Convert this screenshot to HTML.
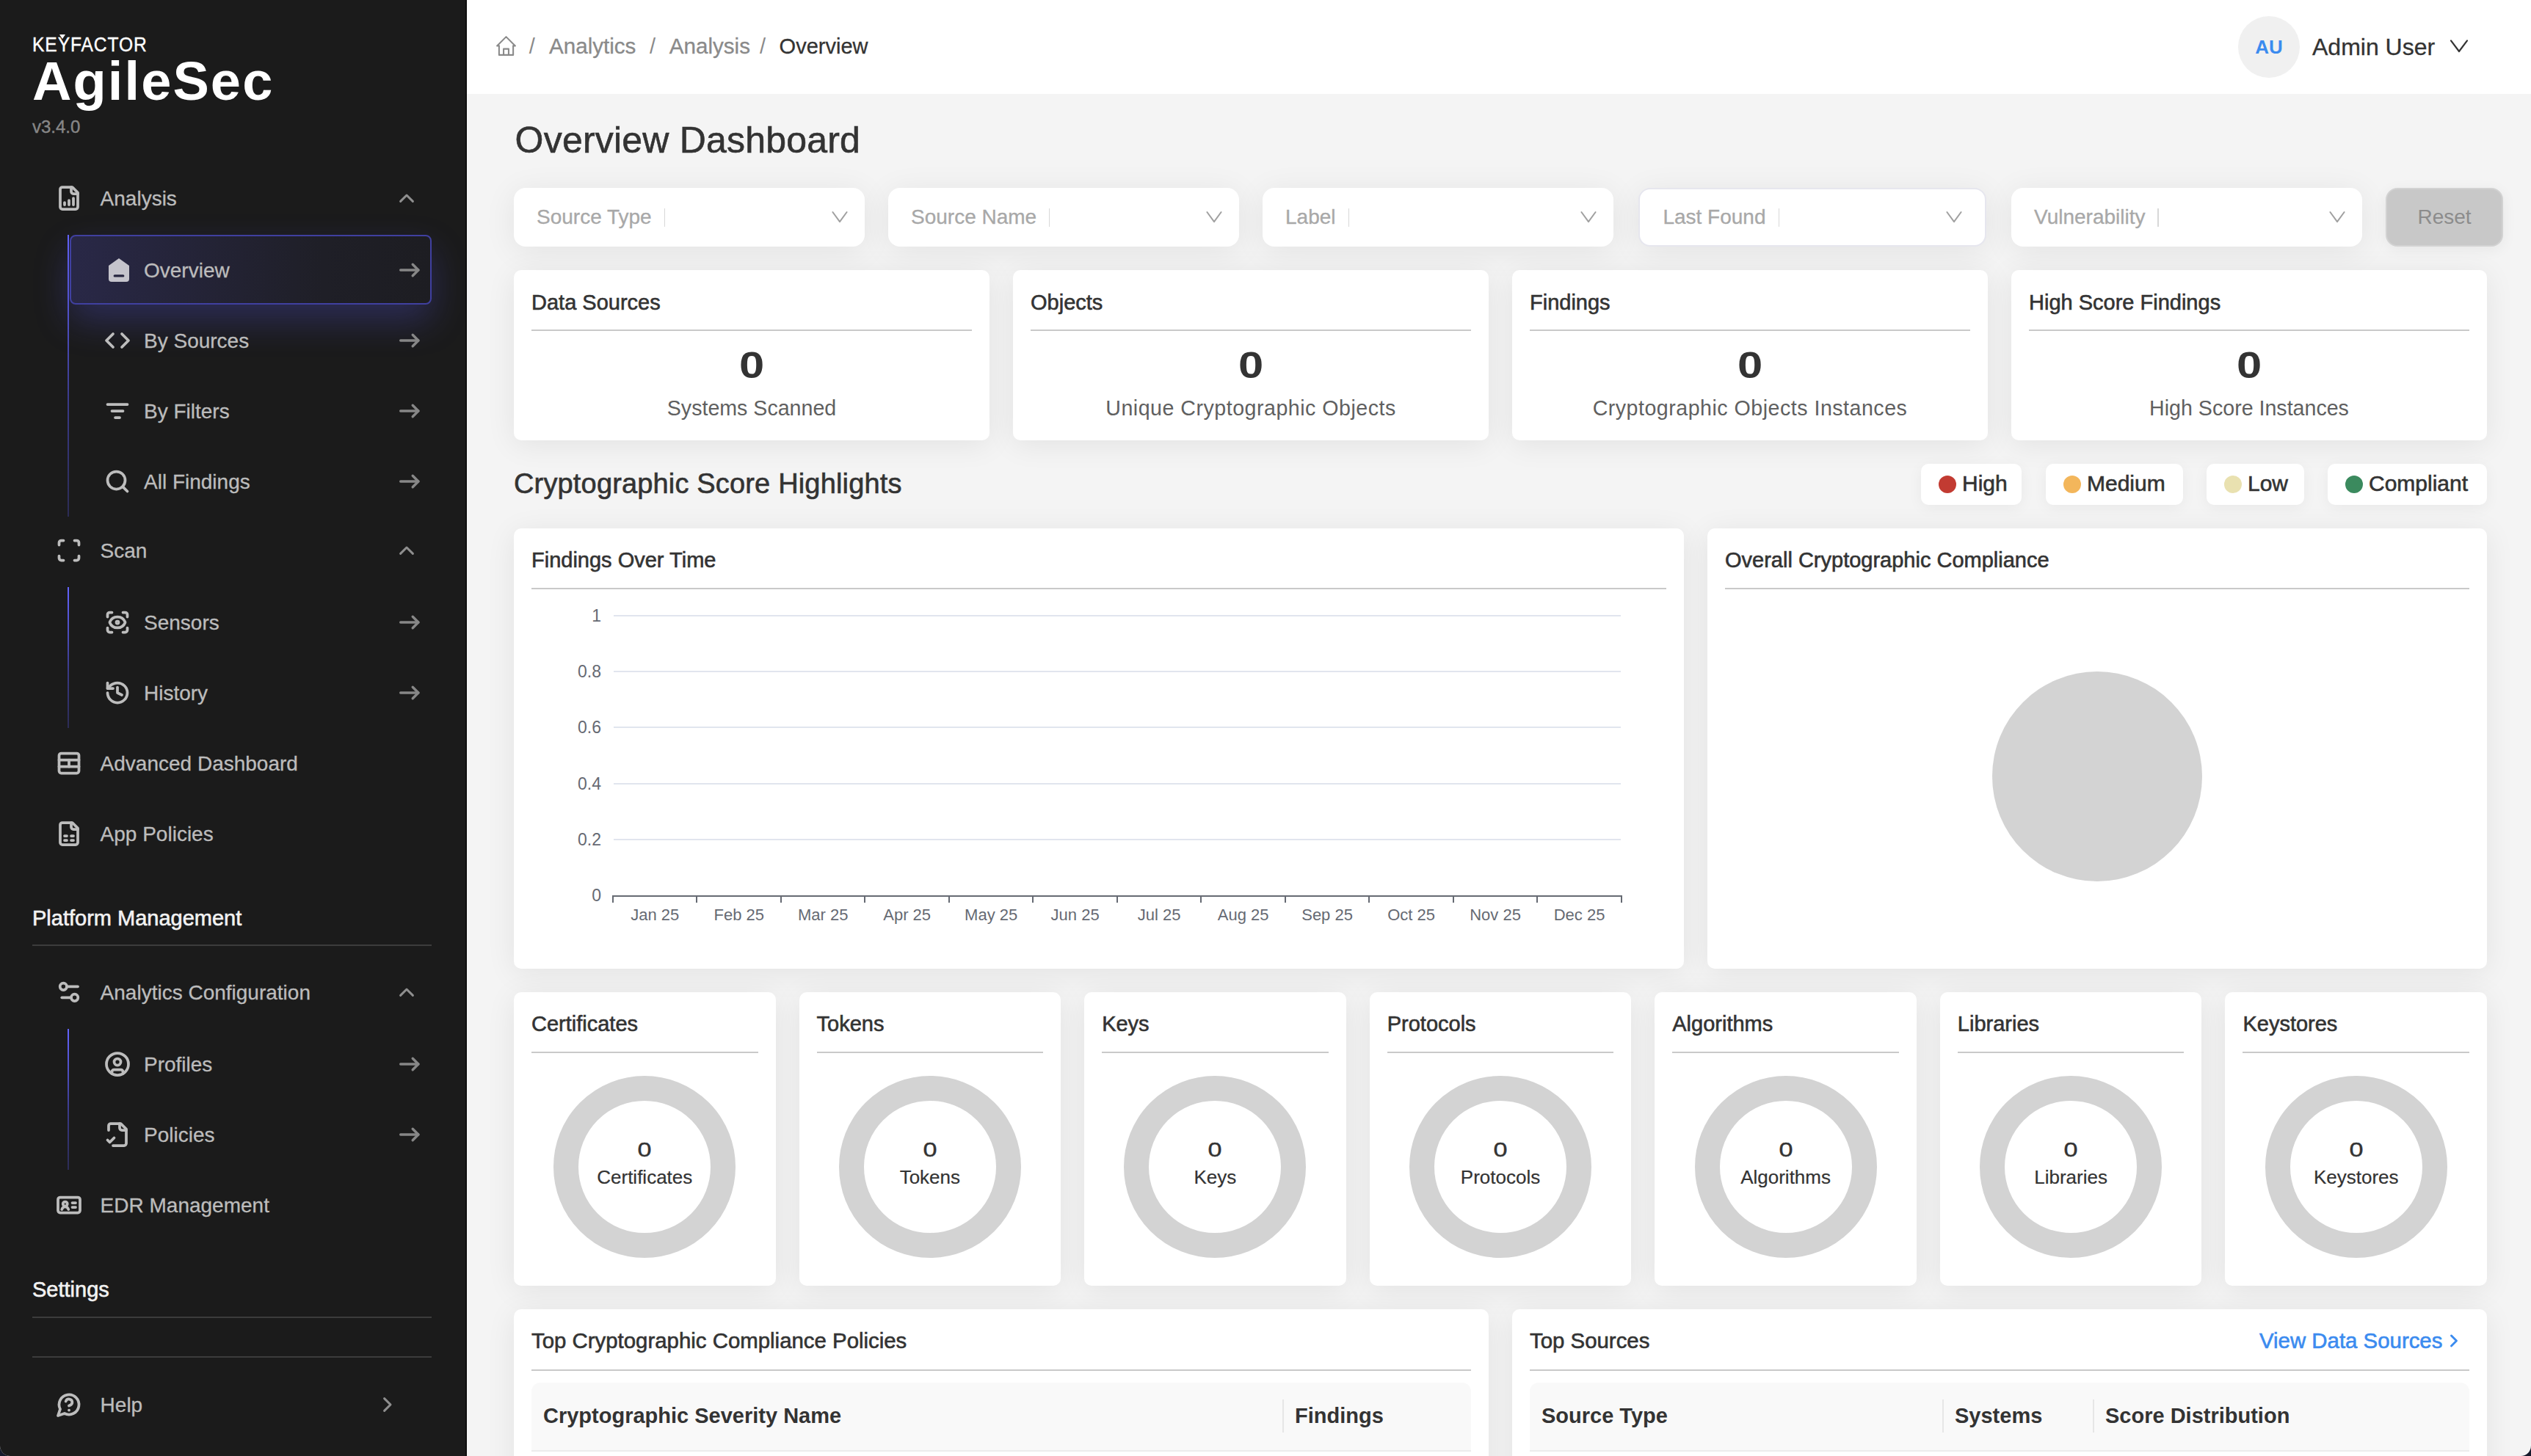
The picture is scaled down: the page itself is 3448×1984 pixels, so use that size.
<!DOCTYPE html>
<html>
<head>
<meta charset="utf-8">
<style>
html{zoom:2;background:#161a2c}
*{box-sizing:border-box;margin:0;padding:0}
body{width:1724px;height:992px;overflow:hidden;border-radius:0 0 7px 7px;font-family:"Liberation Sans",sans-serif;background:#f4f4f4;position:relative;color:#333}
.abs{position:absolute}
.t{position:absolute;white-space:nowrap;line-height:1}
.card{position:absolute;background:#fff;border-radius:5px;box-shadow:0 3px 20px rgba(0,0,0,0.075)}
.med{-webkit-text-stroke:0.25px currentColor}
</style>
</head>
<body>
<div class="abs" style="left:0px;top:0px;width:318px;height:992px;background:#1b1b1b;border-right:1px solid #0e0e0e"></div>
<div class="t" style="left:22px;top:23.3px;font-size:13.6px;color:#fff;transform:scaleX(0.905);transform-origin:0 0;letter-spacing:0.5px;-webkit-text-stroke:0.2px #fff">KEYFACTOR</div>
<svg class="abs" style="left:40.6px;top:23.6px" width="4" height="3" viewBox="0 0 4 3"><path d="M0 0H4L2 3Z" fill="#fff"/></svg>
<div class="t" style="left:22.00px;top:36.88px;font-size:37px;color:#fff;font-weight:bold;letter-spacing:1.05px">AgileSec</div>
<div class="t" style="left:22.00px;top:80.34px;font-size:12px;color:#878787;font-weight:normal;-webkit-text-stroke:0.2px currentColor">v3.4.0</div>
<div class="abs" style="left:46px;top:160px;width:1px;height:192px;background:linear-gradient(#6464ff,#3a3a88 60%,#2c2c55)"></div>
<div class="abs" style="left:46px;top:400px;width:1px;height:96px;background:linear-gradient(#6464ff,#3a3a88 60%,#2c2c55)"></div>
<div class="abs" style="left:46px;top:701px;width:1px;height:96px;background:linear-gradient(#6464ff,#3a3a88 60%,#2c2c55)"></div>
<div class="abs" style="left:47.3px;top:160.2px;width:246.6px;height:47.4px;border:1px solid #4040a0;border-radius:4px;background:linear-gradient(90deg,#292847,#1f1f27 70%,#1d1d22);box-shadow:0 11px 24px rgba(80,80,210,0.32)"></div>
<svg class="abs" style="left:38px;top:126px" width="18" height="18" viewBox="0 0 24 24" fill="none" stroke="#bdbdbd" stroke-width="2.5" stroke-linecap="round" stroke-linejoin="round"><path d="M15 2H6a2 2 0 0 0-2 2v16a2 2 0 0 0 2 2h12a2 2 0 0 0 2-2V7Z"/><path d="M14 2v4a2 2 0 0 0 2 2h4"/><path d="M8 18v-2"/><path d="M12 18v-4"/><path d="M16 18v-6"/></svg>
<div class="t" style="left:68.30px;top:128.35px;font-size:14px;color:#bcbcbc;font-weight:normal;-webkit-text-stroke:0.15px currentColor;">Analysis</div>
<svg class="abs" style="left:270px;top:130px" width="14" height="10" viewBox="0 0 14 10" fill="none" stroke="#8f8f8f" stroke-width="1.5" stroke-linecap="round" stroke-linejoin="round"><path d="M2.8 4.2 7 0 11.2 4.2" transform="translate(0 3)"/></svg>
<svg class="abs" style="left:73.5px;top:175.5px" width="15" height="17" viewBox="0 0 15 17"><path d="M7.5 0.5 L14.5 5.5 V14.5 a2 2 0 0 1 -2 2 H2.5 a2 2 0 0 1 -2 -2 V5.5 Z" fill="#c5c4cc"/><rect x="3.8" y="11.6" width="7.4" height="1.7" rx="0.85" fill="#26253f"/></svg>
<div class="t" style="left:98.00px;top:177.35px;font-size:14px;color:#bcbcbc;font-weight:normal;-webkit-text-stroke:0.15px currentColor;">Overview</div>
<svg class="abs" style="left:270px;top:177px" width="18" height="14" viewBox="0 0 18 14" fill="none" stroke="#878787" stroke-width="1.7" stroke-linecap="round" stroke-linejoin="round"><path d="M2.85 7H14.95"/><path d="M11.1 3.15 14.95 7 11.1 10.85"/></svg>
<svg class="abs" style="left:71px;top:223px" width="18" height="18" viewBox="0 0 24 24" fill="none" stroke="#bdbdbd" stroke-width="2.5" stroke-linecap="round" stroke-linejoin="round"><polyline points="16 18 22 12 16 6"/><polyline points="8 6 2 12 8 18"/></svg>
<div class="t" style="left:98.00px;top:225.35px;font-size:14px;color:#bcbcbc;font-weight:normal;-webkit-text-stroke:0.15px currentColor;">By Sources</div>
<svg class="abs" style="left:270px;top:225px" width="18" height="14" viewBox="0 0 18 14" fill="none" stroke="#878787" stroke-width="1.7" stroke-linecap="round" stroke-linejoin="round"><path d="M2.85 7H14.95"/><path d="M11.1 3.15 14.95 7 11.1 10.85"/></svg>
<svg class="abs" style="left:71px;top:271px" width="18" height="18" viewBox="0 0 24 24" fill="none" stroke="#bdbdbd" stroke-width="2.5" stroke-linecap="round" stroke-linejoin="round"><path d="M3 6h18"/><path d="M7 12h10"/><path d="M10 18h4"/></svg>
<div class="t" style="left:98.00px;top:273.35px;font-size:14px;color:#bcbcbc;font-weight:normal;-webkit-text-stroke:0.15px currentColor;">By Filters</div>
<svg class="abs" style="left:270px;top:273px" width="18" height="14" viewBox="0 0 18 14" fill="none" stroke="#878787" stroke-width="1.7" stroke-linecap="round" stroke-linejoin="round"><path d="M2.85 7H14.95"/><path d="M11.1 3.15 14.95 7 11.1 10.85"/></svg>
<svg class="abs" style="left:71px;top:319px" width="18" height="18" viewBox="0 0 24 24" fill="none" stroke="#bdbdbd" stroke-width="2.5" stroke-linecap="round" stroke-linejoin="round"><circle cx="11" cy="11" r="8"/><path d="m21 21-4.3-4.3"/></svg>
<div class="t" style="left:98.00px;top:321.35px;font-size:14px;color:#bcbcbc;font-weight:normal;-webkit-text-stroke:0.15px currentColor;">All Findings</div>
<svg class="abs" style="left:270px;top:321px" width="18" height="14" viewBox="0 0 18 14" fill="none" stroke="#878787" stroke-width="1.7" stroke-linecap="round" stroke-linejoin="round"><path d="M2.85 7H14.95"/><path d="M11.1 3.15 14.95 7 11.1 10.85"/></svg>
<svg class="abs" style="left:38px;top:366px" width="18" height="18" viewBox="0 0 24 24" fill="none" stroke="#bdbdbd" stroke-width="2.5" stroke-linecap="round" stroke-linejoin="round"><path d="M3 7V5a2 2 0 0 1 2-2h2"/><path d="M17 3h2a2 2 0 0 1 2 2v2"/><path d="M21 17v2a2 2 0 0 1-2 2h-2"/><path d="M7 21H5a2 2 0 0 1-2-2v-2"/></svg>
<div class="t" style="left:68.30px;top:368.35px;font-size:14px;color:#bcbcbc;font-weight:normal;-webkit-text-stroke:0.15px currentColor;">Scan</div>
<svg class="abs" style="left:270px;top:370px" width="14" height="10" viewBox="0 0 14 10" fill="none" stroke="#8f8f8f" stroke-width="1.5" stroke-linecap="round" stroke-linejoin="round"><path d="M2.8 4.2 7 0 11.2 4.2" transform="translate(0 3)"/></svg>
<svg class="abs" style="left:71px;top:415px" width="18" height="18" viewBox="0 0 24 24" fill="none" stroke="#bdbdbd" stroke-width="2.5" stroke-linecap="round" stroke-linejoin="round"><path d="M3 7V5a2 2 0 0 1 2-2h2"/><path d="M17 3h2a2 2 0 0 1 2 2v2"/><path d="M21 17v2a2 2 0 0 1-2 2h-2"/><path d="M7 21H5a2 2 0 0 1-2-2v-2"/><circle cx="12" cy="12" r="1"/><path d="M18.944 12.33a1 1 0 0 0 0-.66 7.5 7.5 0 0 0-13.888 0 1 1 0 0 0 0 .66 7.5 7.5 0 0 0 13.888 0"/></svg>
<div class="t" style="left:98.00px;top:417.35px;font-size:14px;color:#bcbcbc;font-weight:normal;-webkit-text-stroke:0.15px currentColor;">Sensors</div>
<svg class="abs" style="left:270px;top:417px" width="18" height="14" viewBox="0 0 18 14" fill="none" stroke="#878787" stroke-width="1.7" stroke-linecap="round" stroke-linejoin="round"><path d="M2.85 7H14.95"/><path d="M11.1 3.15 14.95 7 11.1 10.85"/></svg>
<svg class="abs" style="left:71px;top:463px" width="18" height="18" viewBox="0 0 24 24" fill="none" stroke="#bdbdbd" stroke-width="2.5" stroke-linecap="round" stroke-linejoin="round"><path d="M3 12a9 9 0 1 0 9-9 9.75 9.75 0 0 0-6.74 2.74L3 8"/><path d="M3 3v5h5"/><path d="M12 7v5l4 2"/></svg>
<div class="t" style="left:98.00px;top:465.35px;font-size:14px;color:#bcbcbc;font-weight:normal;-webkit-text-stroke:0.15px currentColor;">History</div>
<svg class="abs" style="left:270px;top:465px" width="18" height="14" viewBox="0 0 18 14" fill="none" stroke="#878787" stroke-width="1.7" stroke-linecap="round" stroke-linejoin="round"><path d="M2.85 7H14.95"/><path d="M11.1 3.15 14.95 7 11.1 10.85"/></svg>
<svg class="abs" style="left:38px;top:511px" width="18" height="18" viewBox="0 0 24 24" fill="none" stroke="#bdbdbd" stroke-width="2.5" stroke-linecap="round" stroke-linejoin="round"><rect x="3" y="3" width="18" height="18" rx="2"/><path d="M3 9h18"/><path d="M3 15h18"/><path d="M12 9v6"/></svg>
<div class="t" style="left:68.30px;top:513.35px;font-size:14px;color:#bcbcbc;font-weight:normal;-webkit-text-stroke:0.15px currentColor;">Advanced Dashboard</div>
<svg class="abs" style="left:38px;top:559px" width="18" height="18" viewBox="0 0 24 24" fill="none" stroke="#bdbdbd" stroke-width="2.5" stroke-linecap="round" stroke-linejoin="round"><path d="M15 2H6a2 2 0 0 0-2 2v16a2 2 0 0 0 2 2h12a2 2 0 0 0 2-2V7Z"/><path d="M14 2v4a2 2 0 0 0 2 2h4"/><path d="M8 14h2"/><path d="M14 14h2"/><path d="M8 18h2"/><path d="M14 18h2"/></svg>
<div class="t" style="left:68.30px;top:561.35px;font-size:14px;color:#bcbcbc;font-weight:normal;-webkit-text-stroke:0.15px currentColor;">App Policies</div>
<div class="t" style="left:22.00px;top:618.73px;font-size:14.5px;color:#f2f2f2;font-weight:normal;-webkit-text-stroke:0.3px currentColor;">Platform Management</div>
<div class="abs" style="left:22px;top:643.5px;width:272px;height:1px;background:#3c3c3c"></div>
<svg class="abs" style="left:38px;top:667px" width="18" height="18" viewBox="0 0 24 24" fill="none" stroke="#bdbdbd" stroke-width="2.5" stroke-linecap="round" stroke-linejoin="round"><circle cx="6.9" cy="6.9" r="3.1"/><path d="M10 6.9h10"/><circle cx="17.1" cy="16.9" r="3.1"/><path d="M5.5 16.9H14"/></svg>
<div class="t" style="left:68.30px;top:669.35px;font-size:14px;color:#bcbcbc;font-weight:normal;-webkit-text-stroke:0.15px currentColor;">Analytics Configuration</div>
<svg class="abs" style="left:270px;top:671px" width="14" height="10" viewBox="0 0 14 10" fill="none" stroke="#8f8f8f" stroke-width="1.5" stroke-linecap="round" stroke-linejoin="round"><path d="M2.8 4.2 7 0 11.2 4.2" transform="translate(0 3)"/></svg>
<svg class="abs" style="left:71px;top:716px" width="18" height="18" viewBox="0 0 24 24" fill="none" stroke="#bdbdbd" stroke-width="2.5" stroke-linecap="round" stroke-linejoin="round"><circle cx="12" cy="12" r="10"/><circle cx="12" cy="10" r="3"/><path d="M7 20.662V19a2 2 0 0 1 2-2h6a2 2 0 0 1 2 2v1.662"/></svg>
<div class="t" style="left:98.00px;top:718.35px;font-size:14px;color:#bcbcbc;font-weight:normal;-webkit-text-stroke:0.15px currentColor;">Profiles</div>
<svg class="abs" style="left:270px;top:718px" width="18" height="14" viewBox="0 0 18 14" fill="none" stroke="#878787" stroke-width="1.7" stroke-linecap="round" stroke-linejoin="round"><path d="M2.85 7H14.95"/><path d="M11.1 3.15 14.95 7 11.1 10.85"/></svg>
<svg class="abs" style="left:71px;top:764px" width="18" height="18" viewBox="0 0 24 24" fill="none" stroke="#bdbdbd" stroke-width="2.5" stroke-linecap="round" stroke-linejoin="round"><path d="M4 8V4a2 2 0 0 1 2-2h9l5 5v13a2 2 0 0 1-2 2H8"/><path d="M14 2v4a2 2 0 0 0 2 2h4"/><path d="m3 17 2 2 4-4"/></svg>
<div class="t" style="left:98.00px;top:766.35px;font-size:14px;color:#bcbcbc;font-weight:normal;-webkit-text-stroke:0.15px currentColor;">Policies</div>
<svg class="abs" style="left:270px;top:766px" width="18" height="14" viewBox="0 0 18 14" fill="none" stroke="#878787" stroke-width="1.7" stroke-linecap="round" stroke-linejoin="round"><path d="M2.85 7H14.95"/><path d="M11.1 3.15 14.95 7 11.1 10.85"/></svg>
<svg class="abs" style="left:38px;top:812px" width="18" height="18" viewBox="0 0 24 24" fill="none" stroke="#bdbdbd" stroke-width="2.5" stroke-linecap="round" stroke-linejoin="round"><rect x="2" y="5" width="20" height="14" rx="2"/><path d="M15 10h3"/><path d="M15 14h3"/><circle cx="8.5" cy="11" r="2"/><path d="M5.5 16c.5-1.5 1.5-2.5 3-2.5s2.5 1 3 2.5"/></svg>
<div class="t" style="left:68.30px;top:814.35px;font-size:14px;color:#bcbcbc;font-weight:normal;-webkit-text-stroke:0.15px currentColor;">EDR Management</div>
<div class="t" style="left:22.00px;top:871.73px;font-size:14.5px;color:#f2f2f2;font-weight:normal;-webkit-text-stroke:0.3px currentColor;">Settings</div>
<div class="abs" style="left:22px;top:897px;width:272px;height:1px;background:#3c3c3c"></div>
<div class="abs" style="left:22px;top:924px;width:272px;height:1px;background:#3c3c3c"></div>
<svg class="abs" style="left:38px;top:948px" width="18" height="18" viewBox="0 0 24 24" fill="none" stroke="#bdbdbd" stroke-width="2.5" stroke-linecap="round" stroke-linejoin="round"><path d="M7.9 20A9 9 0 1 0 4 16.1L2 22Z"/><path d="M9.09 9a3 3 0 0 1 5.83 1c0 2-3 3-3 3"/><path d="M12 17h.01"/></svg>
<div class="t" style="left:68.30px;top:950.35px;font-size:14px;color:#bcbcbc;font-weight:normal;-webkit-text-stroke:0.15px currentColor;">Help</div>
<svg class="abs" style="left:258px;top:950px" width="10" height="14" viewBox="0 0 10 14" fill="none" stroke="#8f8f8f" stroke-width="1.5" stroke-linecap="round" stroke-linejoin="round"><path d="M3.8 2.8 8 7 3.8 11.2"/></svg>
<div class="abs" style="left:318px;top:0px;width:1406px;height:64px;background:#fff"></div>
<svg class="abs" style="left:336.6px;top:23.2px" width="16.5" height="16.5" viewBox="0 0 24 24" fill="none" stroke="#8a8a8a" stroke-width="1.5" stroke-linecap="round" stroke-linejoin="round"><path d="M5 12H3l9-9 9 9h-2"/><path d="M5 12v9h14v-9"/><path d="M9.5 21v-6h5v6"/></svg>
<div class="t" style="left:360.40px;top:24.48px;font-size:14.5px;color:#8a8a8a;font-weight:normal;">/</div>
<div class="t" style="left:374.00px;top:24.22px;font-size:14.8px;color:#8a8a8a;font-weight:normal;-webkit-text-stroke:0.15px currentColor;">Analytics</div>
<div class="t" style="left:442.50px;top:24.48px;font-size:14.5px;color:#8a8a8a;font-weight:normal;">/</div>
<div class="t" style="left:455.90px;top:24.22px;font-size:14.8px;color:#8a8a8a;font-weight:normal;-webkit-text-stroke:0.15px currentColor;">Analysis</div>
<div class="t" style="left:517.50px;top:24.48px;font-size:14.5px;color:#8a8a8a;font-weight:normal;">/</div>
<div class="t" style="left:530.80px;top:24.48px;font-size:14.5px;color:#333;font-weight:normal;-webkit-text-stroke:0.15px currentColor;">Overview</div>
<div class="abs" style="left:1524.5px;top:11px;width:42px;height:42px;border-radius:50%;background:#f0f0f0"></div>
<div class="t" style="left:1245.50px;width:600px;text-align:center;top:25.50px;font-size:13px;color:#3b8bef;font-weight:bold;">AU</div>
<div class="t" style="left:1575.00px;top:24.16px;font-size:16px;color:#333;font-weight:normal;-webkit-text-stroke:0.15px currentColor;">Admin User</div>
<svg class="abs" style="left:1667px;top:23.5px" width="16" height="16" viewBox="0 0 16 16" fill="none" stroke="#333" stroke-width="1.1" stroke-linecap="round" stroke-linejoin="round"><path d="M2.5 4.2 8 11.5 13.5 4.2"/></svg>
<div class="t" style="left:350.80px;top:83.04px;font-size:25px;color:#333;font-weight:normal;-webkit-text-stroke:0.3px currentColor;letter-spacing:0.1px">Overview Dashboard</div>
<div class="abs" style="left:350px;top:128px;width:239px;height:40px;background:#fff;border-radius:8px;box-shadow:0 3px 22px rgba(0,0,0,0.075)"></div>
<div class="t" style="left:365.5px;top:140.80px;font-size:14px;color:#a8a8a8;-webkit-text-stroke:0.15px currentColor">Source Type<span style="display:inline-block;width:0.6px;height:12.5px;background:#d8d8d8;margin-left:8.5px;vertical-align:-2px"></span></div>
<svg class="abs" style="left:566.5px;top:143.5px" width="11" height="9" viewBox="0 0 11 9" fill="none" stroke="#a0a0a0" stroke-width="1" stroke-linecap="round" stroke-linejoin="round"><path d="M0.7 1 5.5 7.6 10.3 1"/></svg>
<div class="abs" style="left:605px;top:128px;width:239px;height:40px;background:#fff;border-radius:8px;box-shadow:0 3px 22px rgba(0,0,0,0.075)"></div>
<div class="t" style="left:620.5px;top:140.80px;font-size:14px;color:#a8a8a8;-webkit-text-stroke:0.15px currentColor">Source Name<span style="display:inline-block;width:0.6px;height:12.5px;background:#d8d8d8;margin-left:8.5px;vertical-align:-2px"></span></div>
<svg class="abs" style="left:821.5px;top:143.5px" width="11" height="9" viewBox="0 0 11 9" fill="none" stroke="#a0a0a0" stroke-width="1" stroke-linecap="round" stroke-linejoin="round"><path d="M0.7 1 5.5 7.6 10.3 1"/></svg>
<div class="abs" style="left:860px;top:128px;width:239px;height:40px;background:#fff;border-radius:8px;box-shadow:0 3px 22px rgba(0,0,0,0.075)"></div>
<div class="t" style="left:875.5px;top:140.80px;font-size:14px;color:#a8a8a8;-webkit-text-stroke:0.15px currentColor">Label<span style="display:inline-block;width:0.6px;height:12.5px;background:#d8d8d8;margin-left:8.5px;vertical-align:-2px"></span></div>
<svg class="abs" style="left:1076.5px;top:143.5px" width="11" height="9" viewBox="0 0 11 9" fill="none" stroke="#a0a0a0" stroke-width="1" stroke-linecap="round" stroke-linejoin="round"><path d="M0.7 1 5.5 7.6 10.3 1"/></svg>
<div class="abs" style="left:1116px;top:128px;width:237px;height:40px;background:#fff;border-radius:8px;box-shadow:0 3px 22px rgba(0,0,0,0.075);border:1px solid #e6e6ee"></div>
<div class="t" style="left:1132.7px;top:140.80px;font-size:14px;color:#a8a8a8;-webkit-text-stroke:0.15px currentColor">Last Found<span style="display:inline-block;width:0.6px;height:12.5px;background:#d8d8d8;margin-left:8.5px;vertical-align:-2px"></span></div>
<svg class="abs" style="left:1325.5px;top:143.5px" width="11" height="9" viewBox="0 0 11 9" fill="none" stroke="#a0a0a0" stroke-width="1" stroke-linecap="round" stroke-linejoin="round"><path d="M0.7 1 5.5 7.6 10.3 1"/></svg>
<div class="abs" style="left:1370px;top:128px;width:239px;height:40px;background:#fff;border-radius:8px;box-shadow:0 3px 22px rgba(0,0,0,0.075)"></div>
<div class="t" style="left:1385.5px;top:140.80px;font-size:14px;color:#a8a8a8;-webkit-text-stroke:0.15px currentColor">Vulnerability<span style="display:inline-block;width:0.6px;height:12.5px;background:#d8d8d8;margin-left:8.5px;vertical-align:-2px"></span></div>
<svg class="abs" style="left:1586.5px;top:143.5px" width="11" height="9" viewBox="0 0 11 9" fill="none" stroke="#a0a0a0" stroke-width="1" stroke-linecap="round" stroke-linejoin="round"><path d="M0.7 1 5.5 7.6 10.3 1"/></svg>
<div class="abs" style="left:1625px;top:128px;width:80px;height:40px;background:#c8c8c8;border:1px solid #d2d2d2;border-radius:8px;box-shadow:0 2px 10px rgba(0,0,0,0.06)"></div>
<div class="t" style="left:1365.00px;width:600px;text-align:center;top:140.80px;font-size:14px;color:#8c8c8c;font-weight:normal;">Reset</div>
<div class="card" style="left:350px;top:184px;width:324px;height:116px"></div>
<div class="t" style="left:362.00px;top:199.13px;font-size:14.5px;color:#333;font-weight:normal;-webkit-text-stroke:0.3px currentColor;">Data Sources</div>
<div class="abs" style="left:362px;top:224.5px;width:300px;height:1px;background:#c9c9c9"></div>
<div class="t" style="left:212.00px;width:600px;text-align:center;top:236.54px;font-size:25px;color:#333;font-weight:bold;transform:scaleX(1.23)">0</div>
<div class="t" style="left:212.00px;width:600px;text-align:center;top:270.90px;font-size:14.3px;color:#606060;font-weight:normal;">Systems Scanned</div>
<div class="card" style="left:690px;top:184px;width:324px;height:116px"></div>
<div class="t" style="left:702.00px;top:199.13px;font-size:14.5px;color:#333;font-weight:normal;-webkit-text-stroke:0.3px currentColor;">Objects</div>
<div class="abs" style="left:702px;top:224.5px;width:300px;height:1px;background:#c9c9c9"></div>
<div class="t" style="left:552.00px;width:600px;text-align:center;top:236.54px;font-size:25px;color:#333;font-weight:bold;transform:scaleX(1.23)">0</div>
<div class="t" style="left:552.00px;width:600px;text-align:center;top:270.90px;font-size:14.3px;color:#606060;font-weight:normal;letter-spacing:0.25px">Unique Cryptographic Objects</div>
<div class="card" style="left:1030px;top:184px;width:324px;height:116px"></div>
<div class="t" style="left:1042.00px;top:199.13px;font-size:14.5px;color:#333;font-weight:normal;-webkit-text-stroke:0.3px currentColor;">Findings</div>
<div class="abs" style="left:1042px;top:224.5px;width:300px;height:1px;background:#c9c9c9"></div>
<div class="t" style="left:892.00px;width:600px;text-align:center;top:236.54px;font-size:25px;color:#333;font-weight:bold;transform:scaleX(1.23)">0</div>
<div class="t" style="left:892.00px;width:600px;text-align:center;top:270.90px;font-size:14.3px;color:#606060;font-weight:normal;letter-spacing:0.25px">Cryptographic Objects Instances</div>
<div class="card" style="left:1370px;top:184px;width:324px;height:116px"></div>
<div class="t" style="left:1382.00px;top:199.13px;font-size:14.5px;color:#333;font-weight:normal;-webkit-text-stroke:0.3px currentColor;">High Score Findings</div>
<div class="abs" style="left:1382px;top:224.5px;width:300px;height:1px;background:#c9c9c9"></div>
<div class="t" style="left:1232.00px;width:600px;text-align:center;top:236.54px;font-size:25px;color:#333;font-weight:bold;transform:scaleX(1.23)">0</div>
<div class="t" style="left:1232.00px;width:600px;text-align:center;top:270.90px;font-size:14.3px;color:#606060;font-weight:normal;">High Score Instances</div>
<div class="t" style="left:350.00px;top:320.22px;font-size:19px;color:#333;font-weight:normal;-webkit-text-stroke:0.3px currentColor;letter-spacing:0.08px">Cryptographic Score Highlights</div>
<div class="abs" style="left:1308.5px;top:316px;width:68.5px;height:28px;background:#fff;border-radius:5px;box-shadow:0 2px 10px rgba(0,0,0,0.05)"></div>
<div class="abs" style="left:1320.5px;top:324px;width:12px;height:12px;border-radius:50%;background:#c23b32"></div>
<div class="t" style="left:1336.50px;top:322.10px;font-size:15px;color:#333;font-weight:normal;-webkit-text-stroke:0.3px currentColor;">High</div>
<div class="abs" style="left:1393.5px;top:316px;width:93.5px;height:28px;background:#fff;border-radius:5px;box-shadow:0 2px 10px rgba(0,0,0,0.05)"></div>
<div class="abs" style="left:1405.5px;top:324px;width:12px;height:12px;border-radius:50%;background:#f3b65b"></div>
<div class="t" style="left:1421.50px;top:322.10px;font-size:15px;color:#333;font-weight:normal;-webkit-text-stroke:0.3px currentColor;">Medium</div>
<div class="abs" style="left:1503px;top:316px;width:66.5px;height:28px;background:#fff;border-radius:5px;box-shadow:0 2px 10px rgba(0,0,0,0.05)"></div>
<div class="abs" style="left:1515px;top:324px;width:12px;height:12px;border-radius:50%;background:#e9e1b0"></div>
<div class="t" style="left:1531.00px;top:322.10px;font-size:15px;color:#333;font-weight:normal;-webkit-text-stroke:0.3px currentColor;">Low</div>
<div class="abs" style="left:1585.5px;top:316px;width:108.5px;height:28px;background:#fff;border-radius:5px;box-shadow:0 2px 10px rgba(0,0,0,0.05)"></div>
<div class="abs" style="left:1597.5px;top:324px;width:12px;height:12px;border-radius:50%;background:#3b8a5e"></div>
<div class="t" style="left:1613.50px;top:322.10px;font-size:15px;color:#333;font-weight:normal;-webkit-text-stroke:0.3px currentColor;">Compliant</div>
<div class="card" style="left:350px;top:360px;width:797px;height:300px"></div>
<div class="t" style="left:362.00px;top:374.73px;font-size:14.5px;color:#333;font-weight:normal;-webkit-text-stroke:0.3px currentColor;">Findings Over Time</div>
<div class="abs" style="left:362px;top:400.5px;width:773px;height:1px;background:#c9c9c9"></div>
<div class="abs" style="left:417.8px;top:419.0px;width:686px;height:1px;background:#e1e5ee"></div>
<div class="t" style="left:-190.50px;width:600px;text-align:right;top:413.77px;font-size:11.5px;color:#666a73;font-weight:normal;">1</div>
<div class="abs" style="left:417.8px;top:457.0px;width:686px;height:1px;background:#e1e5ee"></div>
<div class="t" style="left:-190.50px;width:600px;text-align:right;top:451.77px;font-size:11.5px;color:#666a73;font-weight:normal;">0.8</div>
<div class="abs" style="left:417.8px;top:495.0px;width:686px;height:1px;background:#e1e5ee"></div>
<div class="t" style="left:-190.50px;width:600px;text-align:right;top:489.77px;font-size:11.5px;color:#666a73;font-weight:normal;">0.6</div>
<div class="abs" style="left:417.8px;top:533.5px;width:686px;height:1px;background:#e1e5ee"></div>
<div class="t" style="left:-190.50px;width:600px;text-align:right;top:528.27px;font-size:11.5px;color:#666a73;font-weight:normal;">0.4</div>
<div class="abs" style="left:417.8px;top:571.5px;width:686px;height:1px;background:#e1e5ee"></div>
<div class="t" style="left:-190.50px;width:600px;text-align:right;top:566.27px;font-size:11.5px;color:#666a73;font-weight:normal;">0.2</div>
<div class="t" style="left:-190.50px;width:600px;text-align:right;top:604.27px;font-size:11.5px;color:#666a73;font-weight:normal;">0</div>
<div class="abs" style="left:417px;top:609.9px;width:688px;height:1px;background:#666a73"></div>
<div class="abs" style="left:417.0px;top:609.9px;width:1px;height:5px;background:#666a73"></div>
<div class="abs" style="left:474.24px;top:609.9px;width:1px;height:5px;background:#666a73"></div>
<div class="abs" style="left:531.48px;top:609.9px;width:1px;height:5px;background:#666a73"></div>
<div class="abs" style="left:588.72px;top:609.9px;width:1px;height:5px;background:#666a73"></div>
<div class="abs" style="left:645.96px;top:609.9px;width:1px;height:5px;background:#666a73"></div>
<div class="abs" style="left:703.2px;top:609.9px;width:1px;height:5px;background:#666a73"></div>
<div class="abs" style="left:760.44px;top:609.9px;width:1px;height:5px;background:#666a73"></div>
<div class="abs" style="left:817.6800000000001px;top:609.9px;width:1px;height:5px;background:#666a73"></div>
<div class="abs" style="left:874.9200000000001px;top:609.9px;width:1px;height:5px;background:#666a73"></div>
<div class="abs" style="left:932.16px;top:609.9px;width:1px;height:5px;background:#666a73"></div>
<div class="abs" style="left:989.4px;top:609.9px;width:1px;height:5px;background:#666a73"></div>
<div class="abs" style="left:1046.6399999999999px;top:609.9px;width:1px;height:5px;background:#666a73"></div>
<div class="abs" style="left:1103.88px;top:609.9px;width:1px;height:5px;background:#666a73"></div>
<div class="t" style="left:146.12px;width:600px;text-align:center;top:618.09px;font-size:11px;color:#666a73;font-weight:normal;">Jan 25</div>
<div class="t" style="left:203.36px;width:600px;text-align:center;top:618.09px;font-size:11px;color:#666a73;font-weight:normal;">Feb 25</div>
<div class="t" style="left:260.60px;width:600px;text-align:center;top:618.09px;font-size:11px;color:#666a73;font-weight:normal;">Mar 25</div>
<div class="t" style="left:317.84px;width:600px;text-align:center;top:618.09px;font-size:11px;color:#666a73;font-weight:normal;">Apr 25</div>
<div class="t" style="left:375.08px;width:600px;text-align:center;top:618.09px;font-size:11px;color:#666a73;font-weight:normal;">May 25</div>
<div class="t" style="left:432.32px;width:600px;text-align:center;top:618.09px;font-size:11px;color:#666a73;font-weight:normal;">Jun 25</div>
<div class="t" style="left:489.56px;width:600px;text-align:center;top:618.09px;font-size:11px;color:#666a73;font-weight:normal;">Jul 25</div>
<div class="t" style="left:546.80px;width:600px;text-align:center;top:618.09px;font-size:11px;color:#666a73;font-weight:normal;">Aug 25</div>
<div class="t" style="left:604.04px;width:600px;text-align:center;top:618.09px;font-size:11px;color:#666a73;font-weight:normal;">Sep 25</div>
<div class="t" style="left:661.28px;width:600px;text-align:center;top:618.09px;font-size:11px;color:#666a73;font-weight:normal;">Oct 25</div>
<div class="t" style="left:718.52px;width:600px;text-align:center;top:618.09px;font-size:11px;color:#666a73;font-weight:normal;">Nov 25</div>
<div class="t" style="left:775.76px;width:600px;text-align:center;top:618.09px;font-size:11px;color:#666a73;font-weight:normal;">Dec 25</div>
<div class="card" style="left:1163px;top:360px;width:531px;height:300px"></div>
<div class="t" style="left:1175.00px;top:374.73px;font-size:14.5px;color:#333;font-weight:normal;-webkit-text-stroke:0.3px currentColor;">Overall Cryptographic Compliance</div>
<div class="abs" style="left:1175px;top:400.5px;width:507px;height:1px;background:#c9c9c9"></div>
<div class="abs" style="left:1357px;top:457.5px;width:143px;height:143px;border-radius:50%;background:#d3d3d3"></div>
<div class="card" style="left:350.00px;top:676px;width:178.29px;height:200px"></div>
<div class="t" style="left:362.00px;top:690.53px;font-size:14.5px;color:#333;font-weight:normal;-webkit-text-stroke:0.3px currentColor;">Certificates</div>
<div class="abs" style="left:362.0px;top:716.5px;width:154.29px;height:1px;background:#c9c9c9"></div>
<div class="abs" style="left:377.14px;top:733px;width:124px;height:124px;border-radius:50%;border:17.3px solid #d3d3d3"></div>
<div class="t" style="left:139.14px;width:600px;text-align:center;top:776.65px;font-size:14px;color:#333;font-weight:normal;transform:scaleX(1.22);-webkit-text-stroke:0.2px currentColor">0</div>
<div class="t" style="left:139.14px;width:600px;text-align:center;top:795.30px;font-size:13px;color:#333;font-weight:normal;-webkit-text-stroke:0.1px currentColor">Certificates</div>
<div class="card" style="left:544.29px;top:676px;width:178.29px;height:200px"></div>
<div class="t" style="left:556.29px;top:690.53px;font-size:14.5px;color:#333;font-weight:normal;-webkit-text-stroke:0.3px currentColor;">Tokens</div>
<div class="abs" style="left:556.29px;top:716.5px;width:154.29px;height:1px;background:#c9c9c9"></div>
<div class="abs" style="left:571.43px;top:733px;width:124px;height:124px;border-radius:50%;border:17.3px solid #d3d3d3"></div>
<div class="t" style="left:333.43px;width:600px;text-align:center;top:776.65px;font-size:14px;color:#333;font-weight:normal;transform:scaleX(1.22);-webkit-text-stroke:0.2px currentColor">0</div>
<div class="t" style="left:333.43px;width:600px;text-align:center;top:795.30px;font-size:13px;color:#333;font-weight:normal;-webkit-text-stroke:0.1px currentColor">Tokens</div>
<div class="card" style="left:738.57px;top:676px;width:178.29px;height:200px"></div>
<div class="t" style="left:750.57px;top:690.53px;font-size:14.5px;color:#333;font-weight:normal;-webkit-text-stroke:0.3px currentColor;">Keys</div>
<div class="abs" style="left:750.57px;top:716.5px;width:154.29px;height:1px;background:#c9c9c9"></div>
<div class="abs" style="left:765.71px;top:733px;width:124px;height:124px;border-radius:50%;border:17.3px solid #d3d3d3"></div>
<div class="t" style="left:527.71px;width:600px;text-align:center;top:776.65px;font-size:14px;color:#333;font-weight:normal;transform:scaleX(1.22);-webkit-text-stroke:0.2px currentColor">0</div>
<div class="t" style="left:527.71px;width:600px;text-align:center;top:795.30px;font-size:13px;color:#333;font-weight:normal;-webkit-text-stroke:0.1px currentColor">Keys</div>
<div class="card" style="left:932.86px;top:676px;width:178.29px;height:200px"></div>
<div class="t" style="left:944.86px;top:690.53px;font-size:14.5px;color:#333;font-weight:normal;-webkit-text-stroke:0.3px currentColor;">Protocols</div>
<div class="abs" style="left:944.86px;top:716.5px;width:154.29px;height:1px;background:#c9c9c9"></div>
<div class="abs" style="left:960.0px;top:733px;width:124px;height:124px;border-radius:50%;border:17.3px solid #d3d3d3"></div>
<div class="t" style="left:722.00px;width:600px;text-align:center;top:776.65px;font-size:14px;color:#333;font-weight:normal;transform:scaleX(1.22);-webkit-text-stroke:0.2px currentColor">0</div>
<div class="t" style="left:722.00px;width:600px;text-align:center;top:795.30px;font-size:13px;color:#333;font-weight:normal;-webkit-text-stroke:0.1px currentColor">Protocols</div>
<div class="card" style="left:1127.14px;top:676px;width:178.29px;height:200px"></div>
<div class="t" style="left:1139.14px;top:690.53px;font-size:14.5px;color:#333;font-weight:normal;-webkit-text-stroke:0.3px currentColor;">Algorithms</div>
<div class="abs" style="left:1139.14px;top:716.5px;width:154.29px;height:1px;background:#c9c9c9"></div>
<div class="abs" style="left:1154.29px;top:733px;width:124px;height:124px;border-radius:50%;border:17.3px solid #d3d3d3"></div>
<div class="t" style="left:916.29px;width:600px;text-align:center;top:776.65px;font-size:14px;color:#333;font-weight:normal;transform:scaleX(1.22);-webkit-text-stroke:0.2px currentColor">0</div>
<div class="t" style="left:916.29px;width:600px;text-align:center;top:795.30px;font-size:13px;color:#333;font-weight:normal;-webkit-text-stroke:0.1px currentColor">Algorithms</div>
<div class="card" style="left:1321.43px;top:676px;width:178.29px;height:200px"></div>
<div class="t" style="left:1333.43px;top:690.53px;font-size:14.5px;color:#333;font-weight:normal;-webkit-text-stroke:0.3px currentColor;">Libraries</div>
<div class="abs" style="left:1333.43px;top:716.5px;width:154.29px;height:1px;background:#c9c9c9"></div>
<div class="abs" style="left:1348.57px;top:733px;width:124px;height:124px;border-radius:50%;border:17.3px solid #d3d3d3"></div>
<div class="t" style="left:1110.57px;width:600px;text-align:center;top:776.65px;font-size:14px;color:#333;font-weight:normal;transform:scaleX(1.22);-webkit-text-stroke:0.2px currentColor">0</div>
<div class="t" style="left:1110.57px;width:600px;text-align:center;top:795.30px;font-size:13px;color:#333;font-weight:normal;-webkit-text-stroke:0.1px currentColor">Libraries</div>
<div class="card" style="left:1515.71px;top:676px;width:178.29px;height:200px"></div>
<div class="t" style="left:1527.71px;top:690.53px;font-size:14.5px;color:#333;font-weight:normal;-webkit-text-stroke:0.3px currentColor;">Keystores</div>
<div class="abs" style="left:1527.71px;top:716.5px;width:154.29px;height:1px;background:#c9c9c9"></div>
<div class="abs" style="left:1542.86px;top:733px;width:124px;height:124px;border-radius:50%;border:17.3px solid #d3d3d3"></div>
<div class="t" style="left:1304.86px;width:600px;text-align:center;top:776.65px;font-size:14px;color:#333;font-weight:normal;transform:scaleX(1.22);-webkit-text-stroke:0.2px currentColor">0</div>
<div class="t" style="left:1304.86px;width:600px;text-align:center;top:795.30px;font-size:13px;color:#333;font-weight:normal;-webkit-text-stroke:0.1px currentColor">Keystores</div>
<div class="card" style="left:350px;top:892px;width:664px;height:120px"></div>
<div class="t" style="left:362.00px;top:906.16px;font-size:14.7px;color:#333;font-weight:normal;-webkit-text-stroke:0.3px currentColor;">Top Cryptographic Compliance Policies</div>
<div class="abs" style="left:362px;top:932.8px;width:640px;height:1.2px;background:#c9c9c9"></div>
<div class="abs" style="left:362px;top:942px;width:640px;height:47px;background:#f9f9f9;border-radius:6px 6px 0 0;border-bottom:1px solid #ececec"></div>
<div class="t" style="left:370.00px;top:957.73px;font-size:14.5px;color:#333;font-weight:bold;">Cryptographic Severity Name</div>
<div class="abs" style="left:873.5px;top:953.5px;width:1px;height:22.5px;background:#e6e6e6"></div>
<div class="t" style="left:882.00px;top:957.73px;font-size:14.5px;color:#333;font-weight:bold;">Findings</div>
<div class="card" style="left:1030px;top:892px;width:664px;height:120px"></div>
<div class="t" style="left:1042.00px;top:906.16px;font-size:14.7px;color:#333;font-weight:normal;-webkit-text-stroke:0.3px currentColor;">Top Sources</div>
<div class="t" style="left:1539.00px;top:905.96px;font-size:14.7px;color:#3b8bef;font-weight:normal;-webkit-text-stroke:0.3px currentColor;">View Data Sources</div>
<svg class="abs" style="left:1664.6px;top:906.6px" width="14" height="14" viewBox="0 0 24 24" fill="none" stroke="#3b8bef" stroke-width="2.5" stroke-linecap="round" stroke-linejoin="round"><path d="m9 18 6-6-6-6"/></svg>
<div class="abs" style="left:1042px;top:932.8px;width:640px;height:1.2px;background:#c9c9c9"></div>
<div class="abs" style="left:1042px;top:942px;width:640px;height:47px;background:#f9f9f9;border-radius:6px 6px 0 0;border-bottom:1px solid #ececec"></div>
<div class="t" style="left:1050.00px;top:957.73px;font-size:14.5px;color:#333;font-weight:bold;">Source Type</div>
<div class="abs" style="left:1323px;top:953.5px;width:1px;height:22.5px;background:#e6e6e6"></div>
<div class="t" style="left:1331.50px;top:957.73px;font-size:14.5px;color:#333;font-weight:bold;">Systems</div>
<div class="abs" style="left:1425.5px;top:953.5px;width:1px;height:22.5px;background:#e6e6e6"></div>
<div class="t" style="left:1434.00px;top:957.73px;font-size:14.5px;color:#333;font-weight:bold;">Score Distribution</div>
</body>
</html>
